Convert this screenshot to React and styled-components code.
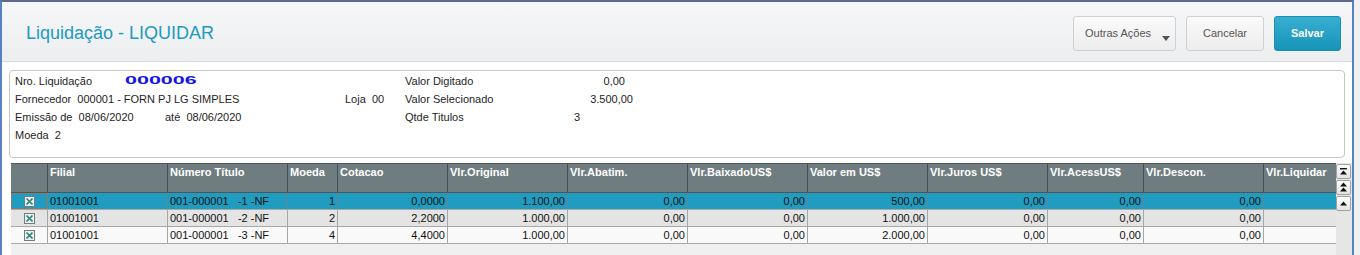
import styled, { createGlobalStyle, css } from "styled-components";

const GlobalStyle = createGlobalStyle`
  html, body {
    margin: 0;
    padding: 0;
    background: #eef0f2;
  }
  body {
    font-family: "Liberation Sans", Arial, sans-serif;
    font-size: 11px;
    color: #1e1e1e;
  }
`;

const Page = styled.div`
  width: 1360px;
  height: 255px;
  overflow: hidden;
`;

const Window = styled.div`
  width: 1354px;
  height: 255px;
  box-sizing: border-box;
  border-top: 2px solid #5b6993;
  border-left: 2px solid #5a80c4;
  border-right: 2px solid #5a80c4;
  background: #fff;
  display: flex;
  flex-direction: column;
`;

const Header = styled.header`
  flex: none;
  height: 60px;
  box-sizing: border-box;
  display: flex;
  align-items: center;
  justify-content: space-between;
  padding: 3px 11px 0 24px;
  background: linear-gradient(#f6f7f8, #eceef0);
  border-bottom: 1px solid #d9d9d9;
`;

const Title = styled.h1`
  margin: 0;
  font-size: 18px;
  font-weight: normal;
  color: #1c9ac3;
`;

const Actions = styled.div`
  display: flex;
  gap: 10px;
`;

const Button = styled.button`
  height: 35px;
  width: ${(p) => p.$w}px;
  box-sizing: border-box;
  display: flex;
  align-items: center;
  justify-content: center;
  padding: 0;
  white-space: nowrap;
  font-family: "Liberation Sans", Arial, sans-serif;
  font-size: 11px;
  color: #555;
  border: 1px solid #d0d0d0;
  border-radius: 3px;
  background: linear-gradient(#fafafa, #ededed);
  ${(p) =>
    p.$primary &&
    css`
      color: #fff;
      font-weight: bold;
      border-color: #1b8fb3;
      background: linear-gradient(#37afd1, #1793b9);
    `}
`;

const MenuButton = styled(Button)`
  justify-content: flex-start;
  padding-left: 11px;
`;

const Caret = styled.span`
  margin: 11px 0 0 11px;
  width: 0;
  height: 0;
  border-left: 4px solid transparent;
  border-right: 4px solid transparent;
  border-top: 5px solid #555;
`;

const Panel = styled.section`
  flex: none;
  margin: 8px 7px 0 7px;
  height: 88px;
  box-sizing: border-box;
  border: 1px solid #c6c6c6;
  border-radius: 4px;
  padding: 1px 0 0 5px;
  display: flex;
`;

const InfoBlock = styled.div`
  width: ${(p) => p.$w}px;
  display: flex;
  flex-direction: column;
`;

const InfoLine = styled.div`
  height: 18px;
  line-height: 18px;
  display: flex;
  white-space: pre;
  width: ${(p) => (p.$w ? `${p.$w}px` : "auto")};
  justify-content: ${(p) => (p.$w ? "space-between" : "flex-start")};
`;

const Field = styled.span`
  width: ${(p) => p.$w}px;
  flex: none;
`;

const Code = styled.span`
  display: inline-block;
  font-size: 10px;
  font-weight: bold;
  color: #1414ee;
  transform: scaleX(2.15);
  transform-origin: left center;
`;

const GridArea = styled.div`
  flex: 1;
  min-height: 0;
  margin: 5px 0 0 9px;
  display: flex;
`;

const Table = styled.div`
  width: 1325px;
  background: #f0f0f0;
`;

const columns = "37px 120px 120px 50px 110px 120px 120px 120px 120px 120px 96px 120px 72px";

const HeadRow = styled.div`
  display: grid;
  grid-template-columns: ${columns};
  height: 30px;
  box-sizing: border-box;
  background: #707d80;
  border-top: 1px solid #4c5557;
  border-bottom: 1px solid #4c5557;
`;

const HeadCell = styled.div`
  box-sizing: border-box;
  border-right: 1px solid #465052;
  padding: 2px 2px;
  color: #fff;
  font-weight: bold;
  white-space: nowrap;
  overflow: hidden;
  &:last-child {
    border-right: none;
  }
`;

const rowColors = {
  selected: "#1f9cbf",
  even: "#e4e4e4",
  odd: "#f9f9f9",
};

const Row = styled.div`
  display: grid;
  grid-template-columns: ${columns};
  height: 17px;
  box-sizing: border-box;
  border-bottom: 1px solid #a8a8a8;
  background: ${(p) => rowColors[p.$tone]};
`;

const Cell = styled.div`
  box-sizing: border-box;
  border-right: 1px solid ${(p) => (p.$dark ? "#5f8794" : "#a6a6a6")};
  padding: 0 2px;
  line-height: 16px;
  color: #111;
  white-space: pre;
  overflow: hidden;
  text-align: ${(p) => (p.$num ? "right" : "left")};
  &:last-child {
    border-right: none;
  }
`;

const CheckCell = styled(Cell)`
  display: flex;
  align-items: center;
  justify-content: center;
  ${(p) =>
    p.$focus &&
    css`
      outline: 1px dotted #e0602a;
      outline-offset: -1px;
    `}
`;

const ScrollBar = styled.div`
  width: 16px;
  background: #e6e6e6;
  display: flex;
  flex-direction: column;
  gap: 1px;
  padding-top: 1px;
`;

const ScrollButton = styled.div`
  width: 15px;
  height: 15px;
  box-sizing: border-box;
  border: 1px solid #a2a2a2;
  border-radius: 2px;
  background: linear-gradient(#fdfdfd, #e4e4e4);
  display: flex;
  align-items: center;
  justify-content: center;
`;

const CheckIcon = () => (
  <svg width="11" height="11" viewBox="0 0 11 11">
    <rect x="0.5" y="0.5" width="10" height="10" fill="#e9f1ef" stroke="#6f7f7f" />
    <path d="M2.5 2.5 L8.5 8.5 M8.5 2.5 L2.5 8.5" stroke="#2f837b" strokeWidth="1.7" />
  </svg>
);

const TopIcon = () => (
  <svg width="9" height="9" viewBox="0 0 9 9">
    <rect x="1" y="1" width="7" height="1.4" fill="#111" />
    <path d="M4.5 3.5 L8 7.5 L1 7.5 Z" fill="#111" />
  </svg>
);

const PageUpIcon = () => (
  <svg width="9" height="11" viewBox="0 0 9 11">
    <path d="M4.5 0.5 L8 4.5 L1 4.5 Z M4.5 5.5 L8 9.5 L1 9.5 Z" fill="#111" />
  </svg>
);

const UpIcon = () => (
  <svg width="9" height="9" viewBox="0 0 9 9">
    <path d="M4.5 2.5 L8 6.5 L1 6.5 Z" fill="#111" />
  </svg>
);

const headers = [
  "",
  "Filial",
  "Número Título",
  "Moeda",
  "Cotacao",
  "Vlr.Original",
  "Vlr.Abatim.",
  "Vlr.BaixadoUS$",
  "Valor em US$",
  "Vlr.Juros US$",
  "Vlr.AcessUS$",
  "Vlr.Descon.",
  "Vlr.Liquidar",
];

const rows = [
  { titulo: "001-000001   -1 -NF", moeda: "1", cot: "0,0000", orig: "1.100,00", us: "500,00", tone: "selected" },
  { titulo: "001-000001   -2 -NF", moeda: "2", cot: "2,2000", orig: "1.000,00", us: "1.000,00", tone: "even" },
  { titulo: "001-000001   -3 -NF", moeda: "4", cot: "4,4000", orig: "1.000,00", us: "2.000,00", tone: "odd" },
];

export default function App() {
  return (
    <Page>
      <GlobalStyle />
      <Window>
        <Header>
          <Title>Liquidação - LIQUIDAR</Title>
          <Actions>
            <MenuButton $w={103}>
              Outras Ações
              <Caret />
            </MenuButton>
            <Button $w={78}>Cancelar</Button>
            <Button $w={67} $primary>
              Salvar
            </Button>
          </Actions>
        </Header>

        <Panel>
          <InfoBlock $w={390}>
            <InfoLine>
              <Field $w={110}>Nro. Liquidação</Field>
              <Code>000006</Code>
            </InfoLine>
            <InfoLine>
              <Field $w={330}>Fornecedor  000001 - FORN PJ LG SIMPLES</Field>
              <span>Loja  00</span>
            </InfoLine>
            <InfoLine>
              <Field $w={150}>Emissão de  08/06/2020</Field>
              <span>até  08/06/2020</span>
            </InfoLine>
            <InfoLine>
              <span>Moeda  2</span>
            </InfoLine>
          </InfoBlock>
          <InfoBlock $w={300}>
            <InfoLine $w={220}>
              <span>Valor Digitado</span>
              <span>0,00</span>
            </InfoLine>
            <InfoLine $w={228}>
              <span>Valor Selecionado</span>
              <span>3.500,00</span>
            </InfoLine>
            <InfoLine $w={175}>
              <span>Qtde Titulos</span>
              <span>3</span>
            </InfoLine>
          </InfoBlock>
        </Panel>

        <GridArea>
          <Table>
            <HeadRow>
              {headers.map((h, i) => (
                <HeadCell key={i}>{h}</HeadCell>
              ))}
            </HeadRow>
            {rows.map((r, i) => {
              const dark = r.tone === "selected";
              return (
                <Row key={i} $tone={r.tone}>
                  <CheckCell $dark={dark} $focus={dark}>
                    <CheckIcon />
                  </CheckCell>
                  <Cell $dark={dark}>01001001</Cell>
                  <Cell $dark={dark}>{r.titulo}</Cell>
                  <Cell $dark={dark} $num>{r.moeda}</Cell>
                  <Cell $dark={dark} $num>{r.cot}</Cell>
                  <Cell $dark={dark} $num>{r.orig}</Cell>
                  <Cell $dark={dark} $num>0,00</Cell>
                  <Cell $dark={dark} $num>0,00</Cell>
                  <Cell $dark={dark} $num>{r.us}</Cell>
                  <Cell $dark={dark} $num>0,00</Cell>
                  <Cell $dark={dark} $num>0,00</Cell>
                  <Cell $dark={dark} $num>0,00</Cell>
                  <Cell $dark={dark} $num></Cell>
                </Row>
              );
            })}
          </Table>
          <ScrollBar>
            <ScrollButton>
              <TopIcon />
            </ScrollButton>
            <ScrollButton>
              <PageUpIcon />
            </ScrollButton>
            <ScrollButton>
              <UpIcon />
            </ScrollButton>
          </ScrollBar>
        </GridArea>
      </Window>
    </Page>
  );
}
